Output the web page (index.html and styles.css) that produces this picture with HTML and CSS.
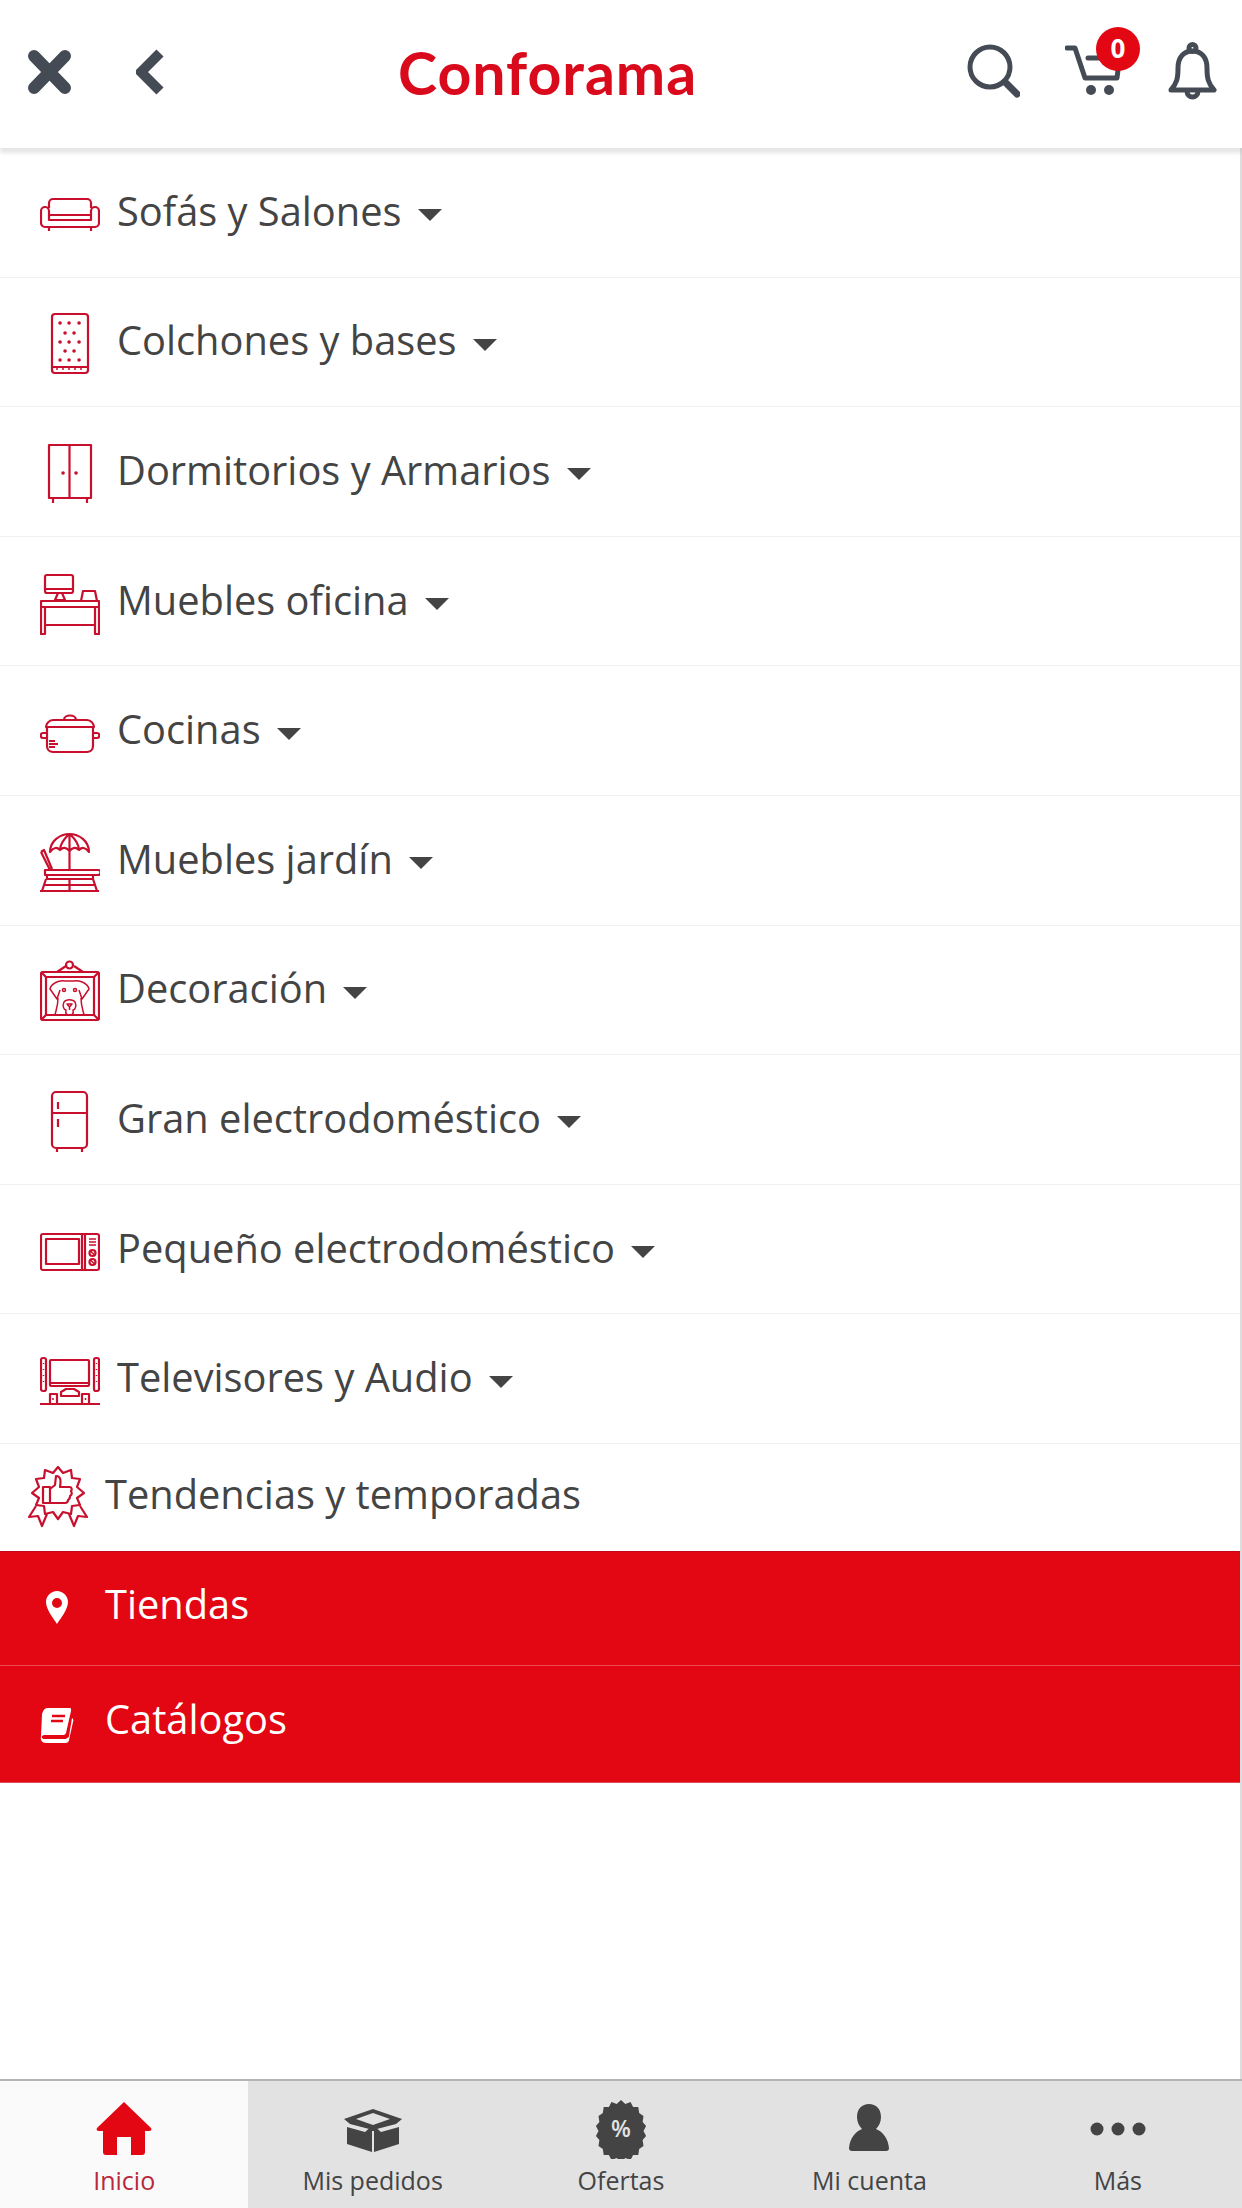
FILE: index.html
```html
<!DOCTYPE html>
<html lang="es">
<head>
    <meta charset="utf-8"/>
    <title>Conforama</title>
    <meta name="viewport" content="width=device-width, initial-scale=1">
    <link rel="stylesheet" href="styles.css">
</head>
<body>
<header class="topbar">
    <svg class="top-icon close-icon" viewBox="0 0 43 64"><path d="M6 14 37 46M37 14 6 46"/></svg>
    <svg class="top-icon back-icon" viewBox="0 0 28 64"><path d="M24 11 5 30 24 49"/></svg>
    <div class="logo">Conforama</div>
    <div class="top-actions">
        <svg class="top-thin search-icon" viewBox="0 0 53 64"><circle cx="23" cy="25" r="20"/><path class="fat" d="M38 40 50 52"/></svg>
        <div class="cart">
            <svg class="top-thin cart-icon" viewBox="0 0 56 64"><path d="M2 6H10L20 36H52L53 28M23 16H44"/><circle class="solid" cx="26" cy="48" r="5"/><circle class="solid" cx="44" cy="48" r="5"/></svg>
            <span class="cart-badge">0</span>
        </div>
        <svg class="top-thin bell-icon" viewBox="0 0 49 64"><path d="M3 48C9 41 10 36 10 26 10 15 16 9 24.500 9 33 9 39 15 39 26 39 36 40 41 46 48Z"/><circle cx="24.500" cy="6" r="3.500"/><path d="M19 49C19 57 30 57 30 49"/></svg>
    </div>
</header>

<main class="content">
    <ul class="menu">
        <li class="menu-row">
            <svg class="cat-icon" viewBox="0 0 60 64"><path d="M1 28a4 4 0 0 1 8 0v9h42v-9a4 4 0 0 1 8 0v12a4 4 0 0 1-4 4H5a4 4 0 0 1-4-4zM9 25v-5a4 4 0 0 1 4-4h34a4 4 0 0 1 4 4v5M9 32h42M9 44v4M51 44v4"/></svg>
            <span class="cat-label">Sofás y Salones</span><i class="caret"></i>
        </li>
        <li class="menu-row">
            <svg class="cat-icon" viewBox="0 0 60 64"><rect x="12" y="2" width="36" height="59" rx="3"/><path d="M12 55h36"/><path class="dots" d="M20 11h.1M29 11h.1M39 11h.1M25 21h.1M34 21h.1M20 30h.1M29 30h.1M39 30h.1M25 39h.1M34 39h.1M20 48h.1M29 48h.1M39 48h.1"/><path class="hair" d="M17 56v2M23 56v2M29 56v2M35 56v2M41 56v2"/></svg>
            <span class="cat-label">Colchones y bases</span><i class="caret"></i>
        </li>
        <li class="menu-row">
            <svg class="cat-icon" viewBox="0 0 60 64"><rect x="9" y="3" width="42" height="53"/><path d="M29.500 3v53M13 56v5M47 56v5"/><path class="dots" d="M23 31h.1M36 31h.1"/></svg>
            <span class="cat-label">Dormitorios y Armarios</span><i class="caret"></i>
        </li>
        <li class="menu-row">
            <svg class="cat-icon" viewBox="0 0 60 64"><rect x="5" y="3" width="28" height="18" rx="2"/><path d="M5 17h28M15 28l3-7h4l3 7zM41 29l2-10h12l2 10M1 29h58v6H1zM1 35v27h4V35M55 35v27h4V35M5 53h50"/></svg>
            <span class="cat-label">Muebles oficina</span><i class="caret"></i>
        </li>
        <li class="menu-row">
            <svg class="cat-icon" viewBox="0 0 60 64"><path d="M6 26c0-3 3-7 7-7h34c4 0 7 4 7 7zM7 26v19c0 4 3 6 6 6h34c3 0 6-2 6-6V26M24 19c0-6 12-6 12 0M7 32H3c-3 0-3 5 0 5h4M53 32h4c3 0 3 5 0 5h-4M9 40h6M9 43h9M9 46h6"/></svg>
            <span class="cat-label">Cocinas</span><i class="caret"></i>
        </li>
        <li class="menu-row">
            <svg class="cat-icon" viewBox="0 0 60 64"><path d="M10 21C10 10 20 3 29.500 3S49 10 49 21C45 16 42 16 39 19 36 16 33 16 29.500 20 26 16 23 16 20 19 17 16 14 16 10 21ZM29.500 3v36M29 3C24 8 20 13 20 19M30 3C35 8 39 13 39 19M1 21l3-2 8 19M1 21l9 18M5 39h53a2 2 0 0 1 0 5H5zM7 44v4h46v-4M6 48 2 60M53 48l4 12M0 60h59M4 54h51M29.500 48v12"/></svg>
            <span class="cat-label">Muebles jardín</span><i class="caret"></i>
        </li>
        <li class="menu-row">
            <svg class="cat-icon" viewBox="0 0 60 64"><rect x="1" y="12" width="58" height="48" rx="2"/><rect x="6" y="17" width="48" height="38"/><path d="M1 12l5 5M59 12l-5 5M1 60l5-5M59 60l-5-5M17 12l9-6M43 12l-9-6"/><circle cx="29.500" cy="5" r="3.500"/><path class="hair" d="M25 21C18 20 11 24 10 29L17 39 20 30M34 21C41 20 48 24 49 29L42 39 39 30M25 21H34M18 38C18 46 16 50 15 55M41 38C41 46 43 50 44 55M24 42C22 46 24 50 26 50 25 54 27 55 29.500 55 32 55 34 54 33 50 35 50 37 46 35 42 33 39 26 39 24 42ZM27 44h5l-2.500 3zM29.500 47v3"/><circle class="hair" cx="24" cy="30" r="1.500"/><circle class="hair" cx="35" cy="30" r="1.500"/></svg>
            <span class="cat-label">Decoración</span><i class="caret"></i>
        </li>
        <li class="menu-row">
            <svg class="cat-icon" viewBox="0 0 60 64"><rect x="12" y="2" width="35" height="56" rx="4"/><path d="M12 23h35M18 12v7M18 29v8M17 58v4M42 58v4"/></svg>
            <span class="cat-label">Gran electrodoméstico</span><i class="caret"></i>
        </li>
        <li class="menu-row">
            <svg class="cat-icon" viewBox="0 0 60 64"><rect x="1" y="14" width="58" height="36" rx="2"/><rect x="6" y="19" width="33" height="25"/><path d="M42 15v35M45 15v35"/><path class="hair" d="M49 19h7M49 22h7M49 25h7"/><circle cx="52.500" cy="33" r="3"/><circle cx="52.500" cy="42" r="3"/><path class="hair" d="M50.500 31l4 4M50.500 40l4 4"/></svg>
            <span class="cat-label">Pequeño electrodoméstico</span><i class="caret"></i>
        </li>
        <li class="menu-row">
            <svg class="cat-icon" viewBox="0 0 60 64"><rect x="1" y="9" width="5" height="33" rx="2"/><rect x="54" y="9" width="5" height="33" rx="2"/><rect x="10" y="11" width="39" height="26" rx="1"/><path d="M10 34h39M21 47v-4l5-3h8l5 3v4zM10 45h7v10h-7zM42 45h7v10h-7zM0 55h60"/><path class="hair" d="M3.500 14v1M3.500 20v1M3.500 26v1M3.500 32v1M56.500 14v1M56.500 20v1M56.500 26v1M56.500 32v1M13 49v2M45.500 49v2"/></svg>
            <span class="cat-label">Televisores y Audio</span><i class="caret"></i>
        </li>
        <li class="menu-row menu-row-plain">
            <svg class="cat-icon" viewBox="0 0 60 64"><path d="M30 2 35 8 43 5 44 13 52 14 49 22 56 28 49 33 52 40 44 41 43 49 35 47 30 54 25 47 17 49 16 41 8 40 11 33 4 28 11 22 8 14 16 13 17 5 25 8Z"/><path d="M8 41 1 52l9-1 4 10 5-12M52 41l7 11-9-1-4 10-5-12M15 22h7v16h-7zM22 24l5-4 1-9c5 0 5 5 4 11h10c2 0 2 3 1 4 1 2 1 4-1 5 0 2 0 3-2 4 0 2-1 3-3 3H22"/></svg>
            <span class="cat-label">Tendencias y temporadas</span>
        </li>
    </ul>

    <ul class="red-menu">
        <li class="red-row red-row-first">
            <svg class="red-icon" viewBox="0 0 60 40"><path fill-rule="evenodd" d="M17 3C11 3 6 8 6 14c0 7 7 16 11 22 4-6 11-15 11-22C28 8 23 3 17 3Zm0 7a5 5 0 1 1 0 10 5 5 0 0 1 0-10Z"/></svg>
            <span class="cat-label">Tiendas</span>
        </li>
        <li class="red-row">
            <svg class="red-icon" viewBox="0 0 60 40"><path d="M7 4H29c3 0 2 2 2 3L26 29c-1 2-2 2-4 2H5c-3 0-4 2-3 3s2 1 3 1H26l1-1c1 0 2-1 2-2l3-18c1 1 2 2 1 4l-4 18c0 2-2 3-3 3H6c-4 0-6-3-5-7L2 10C3 6 5 4 7 4Z"/><path class="book-line" d="M12 12H25M11 17H23"/></svg>
            <span class="cat-label">Catálogos</span>
        </li>
    </ul>
</main>

<nav class="tabbar">
    <div class="tab tab-active">
        <svg class="tab-icon" viewBox="0 0 64 60"><path d="M32 3 5 29c-1 2 0 3 2 3h4v21c0 2 1 3 3 3h11V38h14v18h11c2 0 3-1 3-3V32h4c2 0 3-1 2-3Z"/></svg>
        <span>Inicio</span>
    </div>
    <div class="tab">
        <svg class="tab-icon" viewBox="0 0 64 60"><path d="M3 20 32 10l29 10-6 5-23 6-23-6Z"/><path class="box-top" d="M15 20 32 14l17 6-17 6Z"/><path d="M6 28 24 33 32 26 40 33 58 28V45L33 53V32L31 32V53L6 45Z"/></svg>
        <span>Mis pedidos</span>
    </div>
    <div class="tab">
        <svg class="tab-icon" viewBox="-5 0 74 60" preserveAspectRatio="none"><path d="M32 1l5 4 6-2 3 5h6l1 6 5 3-1 6 4 4-3 5 3 5-4 4 1 6-5 3-1 6h-6l-3 5-6-2-5 4-5-4-6 2-3-5h-6l-1-6-5-3 1-6-4-4 3-5-3-5 4-4-1-6 5-3 1-6h6l3-5 6 2Z"/></svg>
        <em class="percent">%</em>
        <span>Ofertas</span>
    </div>
    <div class="tab">
        <svg class="tab-icon" viewBox="0 0 64 60"><path d="M32 5c7 0 12 5 12 13 0 5-2 9-5 12 7 3 12 9 13 19 0 2-1 3-3 3H15c-2 0-3-1-3-3 1-10 6-16 13-19-3-3-5-7-5-12 0-8 5-13 12-13Z"/></svg>
        <span>Mi cuenta</span>
    </div>
    <div class="tab">
        <svg class="tab-icon" viewBox="0 0 64 60"><circle cx="11" cy="30" r="6.500"/><circle cx="32" cy="30" r="6.500"/><circle cx="53" cy="30" r="6.500"/></svg>
        <span>Más</span>
    </div>
</nav>
</body>
</html>
```

FILE: styles.css
```css
html {
    font-family: "Open Sans", Arial, sans-serif;
}
body {
    margin: 0;
    height: 2208px;
    display: flex;
    flex-direction: column;
    background: #fff;
    color: #444;
    overflow: hidden;
}
ul {
    margin: 0;
    padding: 0;
    list-style: none;
}

/* top bar */
.topbar {
    height: 148px;
    flex: none;
    display: flex;
    align-items: center;
    padding: 0 25px 0 28px;
    background: #fff;
    box-shadow: 0 5px 4px rgba(0, 0, 0, .1);
    position: relative;
    z-index: 2;
}
.top-icon {
    height: 64px;
    fill: none;
    stroke: #454b54;
}
.close-icon {
    width: 43px;
    stroke-width: 12;
    stroke-linecap: round;
}
.back-icon {
    width: 28px;
    margin-left: 65px;
    stroke-width: 10;
}
.logo {
    margin: 0 0 2px 234px;
    font-family: Lato, Arial, sans-serif;
    font-weight: 700;
    font-size: 59px;
    letter-spacing: 1px;
    line-height: 64px;
    color: #d90a1c;
}
.top-actions {
    margin-left: auto;
    display: flex;
    align-items: center;
}
.top-thin {
    height: 64px;
    fill: none;
    stroke: #454b54;
    stroke-width: 5;
    stroke-linecap: round;
    stroke-linejoin: round;
}
.top-thin .fat {
    stroke-width: 7;
}
.top-thin .solid {
    fill: #454b54;
    stroke: none;
}
.search-icon {
    width: 53px;
}
.cart {
    position: relative;
    margin-left: 45px;
}
.cart-icon {
    width: 56px;
    display: block;
}
.bell-icon {
    width: 49px;
    margin-left: 47px;
}
.cart-badge {
    position: absolute;
    top: -15px;
    left: 31px;
    width: 44px;
    height: 44px;
    border-radius: 50%;
    background: #e30613;
    color: #fff;
    font-size: 26px;
    font-weight: 700;
    line-height: 42px;
    text-align: center;
}

/* category list */
.content {
    flex: 1;
    border-right: 2px solid #ddd;
}
.menu-row {
    height: 129.6px;
    box-sizing: border-box;
    display: flex;
    align-items: center;
    padding-left: 40px;
    border-bottom: 1px solid #f1f1f1;
}
.menu-row-plain {
    height: 107px;
    padding-left: 28px;
    border-bottom: none;
}
.cat-icon {
    width: 60px;
    height: 64px;
    flex: none;
    fill: none;
    stroke: #c8102e;
    stroke-width: 2.200;
    stroke-linejoin: round;
    margin: 5px 17px 0 0;
}
.menu-row-plain .cat-icon {
    margin-top: 0;
}
.cat-icon .dots {
    stroke-width: 3.500;
    stroke-linecap: round;
}
.cat-icon .hair {
    stroke-width: 1.500;
}
.cat-label {
    font-size: 39.800px;
    line-height: 56px;
    padding-bottom: 3px;
    color: #444;
}
.menu-row-plain .cat-label {
    padding-bottom: 6px;
}
.caret {
    width: 0;
    height: 0;
    margin: 6px 0 0 16px;
    border-style: solid;
    border-width: 12px 12px 0;
    border-color: #444 transparent transparent;
}

/* red links */
.red-row {
    height: 117px;
    box-sizing: border-box;
    display: flex;
    align-items: center;
    padding-left: 40px;
    background: #e30613;
}
.red-row-first {
    height: 115px;
    border-top: 1px solid #c00a18;
    border-bottom: 1px solid #ee4a55;
}
.red-row .cat-label {
    color: #fff;
    padding-bottom: 9px;
}
.red-row:last-child {
    border-bottom: 1px solid #d9505a;
}
.red-icon {
    width: 60px;
    height: 40px;
    margin-right: 5px;
    fill: #fff;
}
.book-line {
    fill: none;
    stroke: #e30613;
    stroke-width: 2.500;
}

/* bottom tabs */
.tabbar {
    height: 129px;
    box-sizing: border-box;
    flex: none;
    display: flex;
    background: #e2e2e2;
    border-top: 2px solid #b4b4b4;
}
.tab {
    flex: 1;
    position: relative;
    display: flex;
    flex-direction: column;
    align-items: center;
    padding-top: 18px;
    font-size: 25px;
    line-height: 34px;
    color: #444;
}
.tab-active {
    background: #fafafa;
    color: #b8283a;
}
.tab-icon {
    width: 64px;
    height: 60px;
    margin-bottom: 4px;
    fill: #444;
}
.tab-active .tab-icon {
    fill: #e30613;
}
.box-top {
    fill: #e2e2e2;
}
.percent {
    position: absolute;
    top: 30px;
    left: 0;
    right: 0;
    text-align: center;
    font-style: normal;
    font-weight: 600;
    font-size: 23px;
    color: #e2e2e2;
}
```
